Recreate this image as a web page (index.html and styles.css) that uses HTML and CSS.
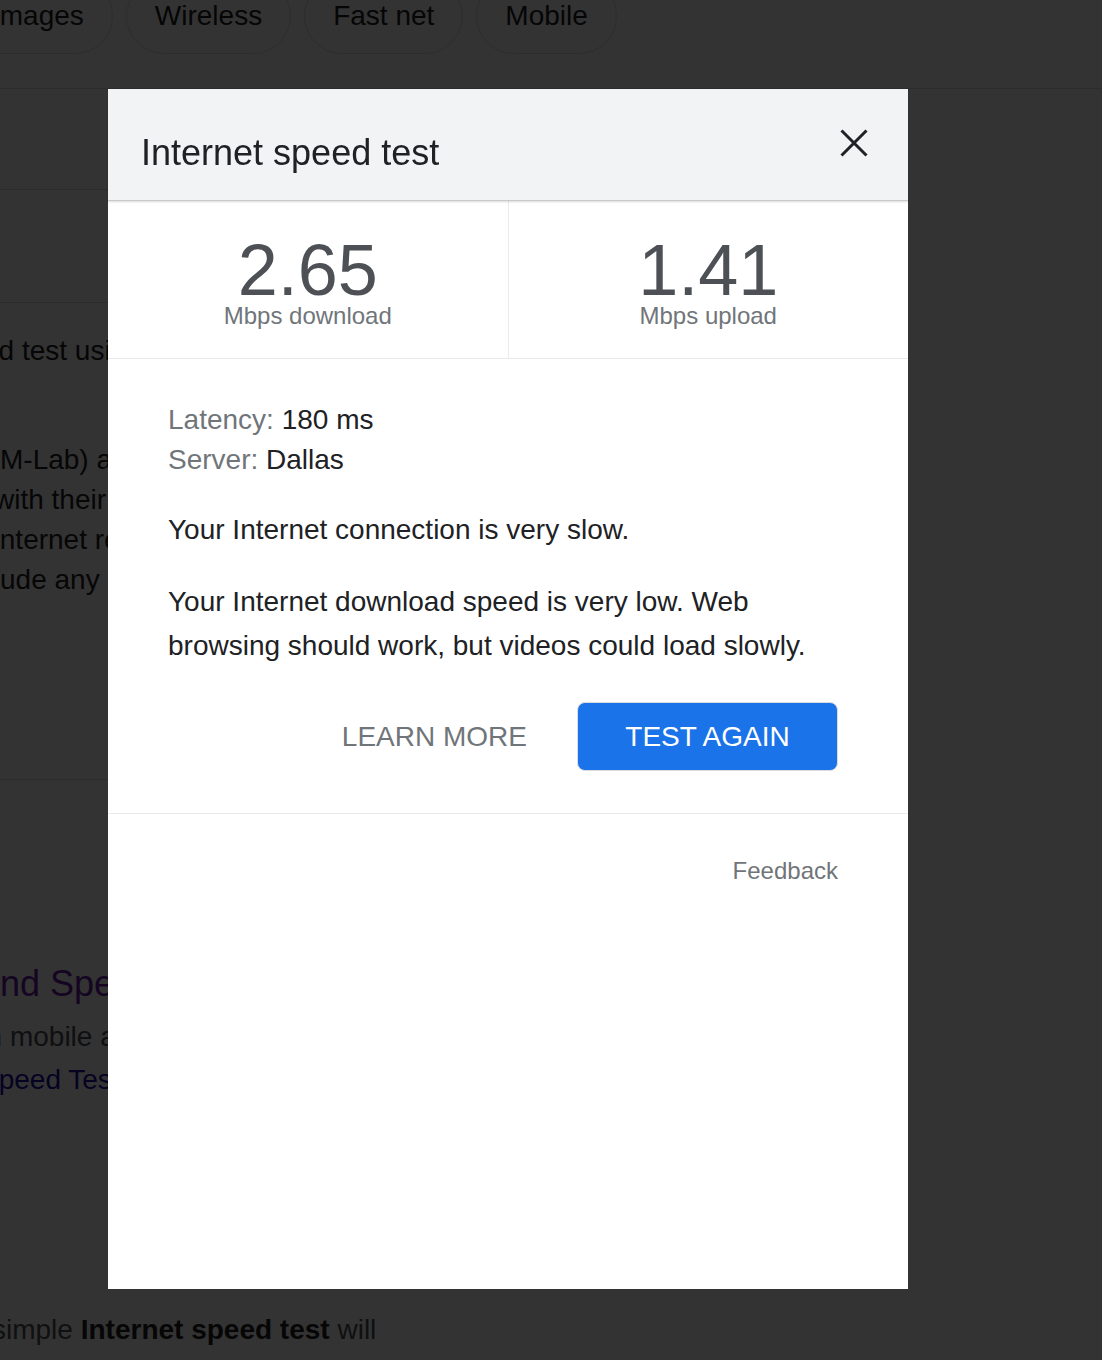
FILE: index.html
```html
<!DOCTYPE html>
<html lang="en">
<head>
<meta charset="utf-8">
<title>Internet speed test</title>
<link rel="stylesheet" href="styles.css">
</head>
<body>
<div class="page">
  <header class="topbar">
    <nav class="chips">
      <span class="chip">Images</span>
      <span class="chip">Wireless</span>
      <span class="chip">Fast net</span>
      <span class="chip">Mobile</span>
    </nav>
  </header>
  <main class="results">
    <section class="res res-1"></section>
    <section class="res res-2"></section>
    <section class="res res-3">
      <p class="line lead">ed test using</p>
      <div class="para">
        <p class="line">M-Lab) and researchers</p>
        <p class="line off-w">with their <a class="link">privacy</a></p>
        <p class="line off-i">Internet research</p>
        <p class="line off-incl">include any other</p>
      </div>
    </section>
    <section class="res res-4">
      <h3 class="res-title">Find Speed Test</h3>
      <p class="line snippet">on mobile and</p>
      <p class="line off-s"><a class="link">Speed Test</a></p>
      <p class="line off-a">simple <b>Internet speed test</b> will</p>
    </section>
  </main>
</div>
<div class="scrim"></div>
<div class="dialog" role="dialog">
  <div class="dlg-head">
    <h2 class="dlg-title">Internet speed test</h2>
    <button class="close" aria-label="Close">
      <svg width="28" height="28" viewBox="0 0 28 28"><path d="M1.5 1.5 L26.5 26.5 M26.5 1.5 L1.5 26.5" stroke="#202124" stroke-width="3" fill="none"/></svg>
    </button>
  </div>
  <div class="stats">
    <div class="stat stat-left">
      <div class="num">2.65</div>
      <div class="unit">Mbps download</div>
    </div>
    <div class="stat">
      <div class="num">1.41</div>
      <div class="unit">Mbps upload</div>
    </div>
  </div>
  <div class="dlg-body">
    <div class="meta">
      <div><span class="k">Latency:</span> 180 ms</div>
      <div><span class="k">Server:</span> Dallas</div>
    </div>
    <p class="verdict">Your Internet connection is very slow.</p>
    <p class="detail">Your Internet download speed is very low. Web browsing should work, but videos could load slowly.</p>
    <div class="actions">
      <button class="btn-text">LEARN MORE</button>
      <button class="btn-primary">TEST AGAIN</button>
    </div>
  </div>
  <div class="dlg-foot">
    <a class="feedback">Feedback</a>
  </div>
</div>
</body>
</html>
```
FILE: styles.css
```css
html, body {
  margin: 0;
  padding: 0;
  background: #ffffff;
  font-family: "Liberation Sans", Arial, sans-serif;
  color: #202124;
}

.page {
  width: 1102px;
  min-height: 1360px;
  overflow: hidden;
}

/* background search page */
.topbar {
  display: flex;
  height: 88px;
  border-bottom: 1px solid #dadce0;
}

.chips {
  display: flex;
  gap: 13px;
  margin-top: -22px;
  margin-left: -37px;
  height: 76px;
}

.chip {
  display: flex;
  align-items: center;
  height: 74px;
  padding: 0 28px;
  border: 1px solid #dadce0;
  border-radius: 38px;
  font-size: 28px;
  color: #202124;
  white-space: nowrap;
  box-sizing: content-box;
}

.results {
  width: 700px;
}

.res {
  border-bottom: 1px solid #dadce0;
}

.res-1 { height: 100px; }
.res-2 { height: 112px; }

.res-3 {
  padding: 28px 0 179px;
}

.line {
  margin: 0;
  font-size: 28px;
  line-height: 40px;
  white-space: nowrap;
  color: #202124;
}

.lead { margin-left: -17px; }

.para { margin-top: 69px; }

.off-w { margin-left: -6px; }
.off-i { margin-left: -8px; }
.off-incl { margin-left: -42px; }

.link { color: #1a0dab; }

.res-4 {
  border-bottom: none;
  padding-top: 182px;
}

.res-title {
  margin: 0 0 11px -30px;
  font-size: 36px;
  line-height: 44px;
  font-weight: normal;
  color: #681da8;
  white-space: nowrap;
}

.snippet {
  margin-left: -29px;
  color: #4d5156;
}

.off-s { margin: 3px 0 0 -20px; }

.off-a {
  margin: 210px 0 0 -8px;
  color: #4d5156;
}
.off-a b { color: #202124; }

.scrim {
  position: fixed;
  inset: 0;
  background: rgba(0, 0, 0, 0.8);
}

/* dialog */
.dialog {
  position: absolute;
  top: 89px;
  left: 108px;
  width: 800px;
  height: 1200px;
  background: #ffffff;
  display: flex;
  flex-direction: column;
}

.dlg-head {
  display: flex;
  justify-content: space-between;
  align-items: flex-start;
  height: 112px;
  box-sizing: border-box;
  padding: 40px 40px 0 33px;
  background: #f1f3f4;
  border-bottom: 1px solid #c8c9cb;
  box-shadow: 0 1px 2px rgba(0, 0, 0, 0.15);
  position: relative;
}

.dlg-title {
  margin: 4px 0 0;
  font-size: 36px;
  line-height: 40px;
  font-weight: normal;
  color: #202124;
}

.close {
  display: block;
  width: 28px;
  height: 28px;
  padding: 0;
  border: none;
  background: none;
}
.close svg { display: block; }

.stats {
  display: flex;
  border-bottom: 1px solid #e8eaed;
}

.stat {
  flex: 1;
  display: flex;
  flex-direction: column;
  align-items: center;
  padding: 37px 0 28px;
}

.stat-left {
  border-right: 1px solid #e8eaed;
}

.num {
  font-size: 72px;
  line-height: 64px;
  color: #4d5156;
}

.unit {
  font-size: 24px;
  line-height: 28px;
  color: #70757a;
}

.dlg-body {
  padding: 41px 70px 42px 60px;
  border-bottom: 1px solid #e8eaed;
  font-size: 28px;
  color: #202124;
}

.meta {
  line-height: 40px;
}

.k { color: #70757a; }

.verdict {
  margin: 30px 0 0;
  line-height: 40px;
}

.detail {
  margin: 30px 0 0;
  line-height: 44px;
}

.actions {
  display: flex;
  justify-content: flex-end;
  align-items: center;
  gap: 26px;
  margin-top: 34px;
}

.btn-text {
  height: 69px;
  padding: 0 24px;
  border: none;
  background: none;
  font-family: inherit;
  font-size: 28px;
  color: #70757a;
}

.btn-primary {
  width: 261px;
  height: 69px;
  box-sizing: border-box;
  border: 1px solid #dadce0;
  border-radius: 8px;
  background: #1a73e8;
  color: #ffffff;
  font-family: inherit;
  font-size: 28px;
}

.dlg-foot {
  display: flex;
  justify-content: flex-end;
  padding: 43px 70px 0 60px;
}

.feedback {
  font-size: 24px;
  line-height: 28px;
  color: #70757a;
}
```
